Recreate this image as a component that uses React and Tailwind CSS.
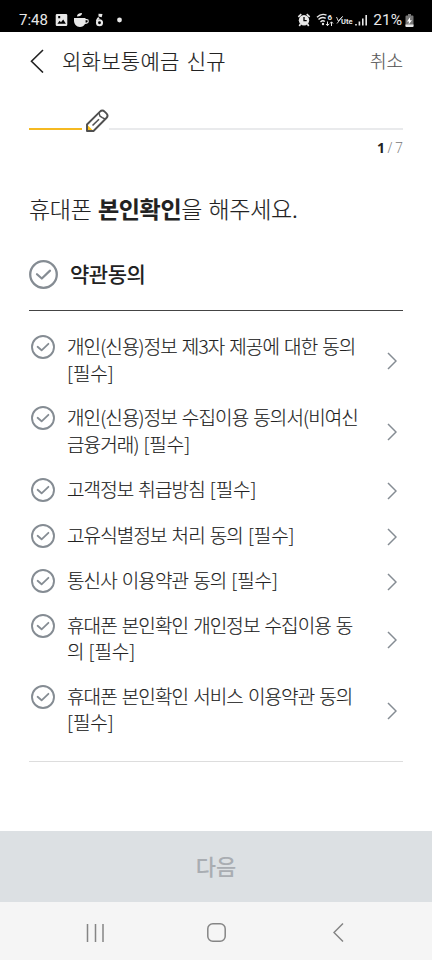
import React from 'react';

const terms = [
  { id: 1, lines: ['개인(신용)정보 제3자 제공에 대한 동의', ''] },
  { id: 2, lines: ['개인(신용)정보 수집이용 동의서(비여신', '금융거래) '] },
  { id: 3, lines: ['고객정보 취급방침 '] },
  { id: 4, lines: ['고유식별정보 처리 동의 '] },
  { id: 5, lines: ['통신사 이용약관 동의 '] },
  { id: 6, lines: ['휴대폰 본인확인 개인정보 수집이용 동', '의 '] },
  { id: 7, lines: ['휴대폰 본인확인 서비스 이용약관 동의', ''] },
];

const CheckCircle = ({ className }) => (
  <svg viewBox="0 0 24 24" fill="none" stroke="#858c93" className={className}>
    <circle cx="12" cy="12" r="11" strokeWidth="1.9" />
    <path d="M6.600 11.800l4 3.500 6.800-6.500" strokeWidth="1.800" strokeLinecap="round" strokeLinejoin="round" />
  </svg>
);

const StatusBar = () => (
  <div className="h-8 bg-black text-[#e8e8e8] flex items-center pt-2 pl-[19px] pr-[18px] font-[Roboto,sans-serif]">
    <span className="text-[15px] leading-6 w-[31px]">7:48</span>
    <svg width="72" height="16" viewBox="0 0 72 16" className="ml-[5px]" fill="currentColor">
      <path fillRule="evenodd" d="M2 2h9a1.300 1.300 0 0 1 1.300 1.300v9.400A1.300 1.300 0 0 1 11 14H2a1.300 1.300 0 0 1-1.300-1.300V3.300A1.300 1.300 0 0 1 2 2zm.4 9.700h8.500L8.200 7.600 6 10.300 4.600 8.700zM3.200 4v2.200h2V4z" />
      <path d="M19 6h11.500v1h1.300a2 2 0 0 1 2 2.200c0 1.800-1.500 2.600-3.800 2.800-1 1.800-2.800 3-5 3-3.800 0-6-3-6-6.500zM22 4.500c0-2 1.500-3.500 5-3.500 0 2-1.500 3.500-5 3.500z" />
      <path d="M30.500 8.200h1.300c.5 0 .9.400.9 1 0 .9-.8 1.400-2 1.500z" fill="#000" />
      <circle cx="44.500" cy="10.800" r="2.500" fill="none" stroke="currentColor" strokeWidth="2.100" />
      <path d="M41 9.500c0-2 1-3.500 2.400-4.500l1.300 1.800c-1.400.6-2 1.200-2.400 2.200zM43.500 1.800l4 .2-.8 3.200-3.200-.6z" />
      <circle cx="64.500" cy="8" r="2.400" />
    </svg>
    <div className="flex items-center ml-auto">
      <svg width="76" height="16" viewBox="0 0 76 16" fill="none" stroke="currentColor">
        <circle cx="7" cy="8.300" r="5.200" fill="currentColor" stroke="none" />
        <path d="M1.300 4.800l3-2.600M12.700 4.800l-3-2.600M3.500 12l-1.200 2M10.500 12l1.200 2" strokeWidth="1.600" />
        <path d="M7 5v3.600h2.700" stroke="#000" strokeWidth="1.300" />
        <path d="M20 5.200c3-2.900 7-3.200 9.500-2M21.500 7.600c2-2 5-2.400 7.200-1.200M23.500 9.900c1.300-1.200 3-1.400 4.300-.4" strokeWidth="1.400" />
        <circle cx="26" cy="12" r="1.200" fill="currentColor" stroke="none" />
        <path d="M30.500 9.500v4M29 12l1.500 1.700L32 12M34.500 14v-4M33 11.500l1.500-1.700 1.500 1.700" strokeWidth="1" />
        <path d="M39.500 5l1.800 4L45.500 4.500M40 11.500l5.500-7" strokeWidth=".9" />
        <path d="M59 13.500V12M62.400 13.500V9.500M65.800 13.500V6.500M69.200 13.500V3" strokeWidth="1.600" />
        <text x="30.500" y="7.800" fontSize="8" fontWeight="700" fill="currentColor" stroke="none">6</text>
        <text x="44" y="11.800" fontSize="7.500" fontWeight="700" fill="currentColor" stroke="none">Ute</text>
      </svg>
      <span className="text-[15.500px] leading-6">21%</span>
      <svg width="9" height="13" viewBox="0 0 9 13" className="ml-[3px]">
        <path d="M3 0h3v1.500h1.500a1 1 0 0 1 1 1V12a1 1 0 0 1-1 1h-6a1 1 0 0 1-1-1V2.500a1 1 0 0 1 1-1H3z" fill="#777" />
        <path d="M.5 10.500h8V12a1 1 0 0 1-1 1h-6a1 1 0 0 1-1-1z" fill="#e8e8e8" />
        <path d="M5.200 3L2 7.500h2L3.600 10.500 7 6.200H4.900z" fill="#fff" />
      </svg>
    </div>
  </div>
);

const Header = () => (
  <header className="h-[58px] flex items-center pl-[30px] pr-[29px]">
    <svg width="14" height="24" viewBox="0 0 14 24" fill="none" stroke="#222" strokeWidth="1.600">
      <path d="M13 1L1.500 12.300 13 23.500" />
    </svg>
    <h1 className="ml-[18px] -mt-[1px] text-[21px] tracking-[0.3px] [word-spacing:2px] font-light text-[#222] [-webkit-text-stroke:0.200px]">외화보통예금 신규</h1>
    <button className="ml-auto -mt-[1px] text-[18px] font-light text-[#555] [-webkit-text-stroke:0.150px]">취소</button>
  </header>
);

const Progress = () => (
  <div className="px-[29px] pt-[18px]">
    <div className="flex items-end h-[25px]">
      <div className="w-[53px] h-[2px] bg-[#f5b921] mb-[3px]" />
      <svg width="24" height="24" viewBox="0 0 24 24" fill="none" stroke="#505050" strokeLinejoin="round" className="ml-[3px]">
        <path d="M2 15.500L15 2.600c1.400-1.400 3.200-1.400 4.600 0l1.800 1.800c1.400 1.400 1.400 3.200 0 4.600L8.500 22H2z" fill="#fff" />
        <path d="M2 15.500V22h6.500z" fill="#fcc21b" stroke="none" />
        <path d="M2 15.500L15 2.600c1.400-1.400 3.200-1.400 4.600 0l1.800 1.800c1.400 1.400 1.400 3.200 0 4.600L8.500 22H2z" strokeWidth="1.900" />
        <path d="M14 4l1 3.200 2.300 1.500L20 10" strokeWidth="1.400" />
        <path d="M7.500 16.500l6.500-6.300" strokeWidth="1.600" />
      </svg>
      <div className="flex-1 h-[2px] bg-[#e9eaec] mb-[3px]" />
    </div>
    <p className="mt-[5px] text-right text-[14px] leading-5 text-[#777] font-light font-['Open_Sans',sans-serif] [word-spacing:-1px]">
      <b className="font-bold text-[#222]">1</b> / 7
    </p>
  </div>
);

const TermItem = ({ lines }) => (
  <li className={lines.length > 1 ? 'flex h-[71px] pt-[9px]' : 'flex h-[45.500px] pt-[10px]'}>
    <CheckCircle className="w-6 h-6 ml-[2px] shrink-0" />
    <p className="ml-3 -mt-[2px] text-[19px] leading-[26.500px] tracking-[-0.870px] [word-spacing:1.600px] font-light text-[#222] [-webkit-text-stroke:0.150px] whitespace-nowrap">
      {lines.map((line, i) => (
        <span key={i} className="block">
          {line}
          {i === lines.length - 1 && <span className="tracking-[-0.100px]">[필수]</span>}
        </span>
      ))}
    </p>
    <svg width="10" height="18" viewBox="0 0 10 18" fill="none" stroke="#858c93" strokeWidth="1.500" className={lines.length > 1 ? 'ml-auto mr-[6px] mt-[17px]' : 'ml-auto mr-[6px] mt-[4px]'}>
      <path d="M1 1l8 8-8 8" />
    </svg>
  </li>
);

const NavBar = () => (
  <nav className="h-[58px] bg-[#f5f5f5] flex items-center justify-between pl-[86px] pr-[88px] pt-[3px]">
    <svg width="18" height="18" viewBox="0 0 18 18" stroke="#858585" strokeWidth="1.500">
      <path d="M1.500 0v18M9.500 0v18M17 0v18" />
    </svg>
    <svg width="19" height="19" viewBox="0 0 19 19" fill="none" stroke="#858585" strokeWidth="1.500" className="-ml-[4px]">
      <rect x=".8" y=".8" width="17.400" height="17.400" rx="5" />
    </svg>
    <svg width="11" height="19" viewBox="0 0 11 19" fill="none" stroke="#858585" strokeWidth="1.500">
      <path d="M10 .5L1 9.500l9 9" />
    </svg>
  </nav>
);

function App() {
  return (
    <div className="w-full h-[960px] flex flex-col bg-white overflow-hidden font-['Noto_Sans_CJK_KR',sans-serif]">
      <StatusBar />
      <Header />
      <Progress />
      <main className="flex-1 px-[29px]">
        <h2 className="mt-[34px] text-[23px] leading-8 tracking-[-0.300px] [word-spacing:1.500px] font-light text-[#222] [-webkit-text-stroke:0.150px]">
          휴대폰 <b className="font-bold">본인확인</b>을 해주세요.
        </h2>
        <div className="flex items-center h-[87px] border-b border-[#444]">
          <CheckCircle className="w-[29px] h-[29px] mt-[14px]" />
          <h3 className="ml-3 mt-[13px] text-[21px] tracking-[-0.500px] font-medium text-[#222]">약관동의</h3>
        </div>
        <ul className="pt-[15px] pb-[14px] border-b border-[#ddd]">
          {terms.map((term) => (
            <TermItem key={term.id} lines={term.lines} />
          ))}
        </ul>
      </main>
      <button className="h-[71px] pb-[3px] bg-[#dce0e3] text-[22px] font-medium text-[#a9adb2]">다음</button>
      <NavBar />
    </div>
  );
}

export default App;
